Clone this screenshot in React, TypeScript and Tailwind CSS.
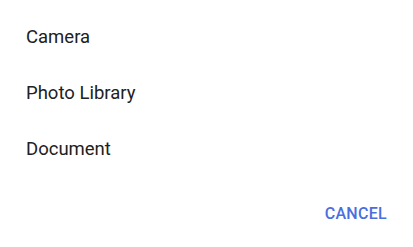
export default function App() {
  const items = ['Camera', 'Photo Library', 'Document']
  return (
    <div className="w-[413px] h-[247px] bg-white font-['Roboto',sans-serif] flex flex-col">
      <ul className="pt-[10px]">
        {items.map((item) => (
          <li key={item} className="h-[56px] flex items-center pl-[26px] text-[18.5px] text-[#212121]">
            {item}
          </li>
        ))}
      </ul>
      <div className="flex justify-end pr-[26px] pt-[18px]">
        <button className="h-[36px] text-[16px] font-medium tracking-[0.3px] text-[#4a6ee0]">CANCEL</button>
      </div>
    </div>
  )
}
